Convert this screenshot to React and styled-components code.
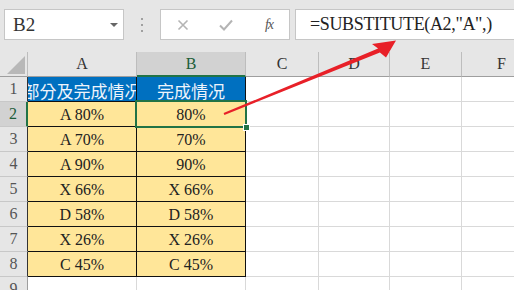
import styled, { createGlobalStyle } from "styled-components";

const GlobalStyle = createGlobalStyle`
  html, body {
    margin: 0;
    padding: 0;
    background: #fff;
  }
  * {
    box-sizing: border-box;
  }
`;

const Sheet = styled.div`
  position: relative;
  width: 514px;
  height: 290px;
  overflow: hidden;
  background: #fff;
  font-family: "Liberation Serif", "Noto Sans CJK TC", serif;
`;

/* formula bar */
const Toolbar = styled.div`
  height: 52px;
  background: #e6e6e6;
  display: flex;
  align-items: flex-start;
  padding-top: 9px;
  & > * {
    flex-shrink: 0;
  }
`;

const NameBox = styled.div`
  margin-left: 4px;
  width: 120px;
  height: 31px;
  border: 1px solid #c6c6c6;
  background: #fff;
  display: flex;
  align-items: center;
  padding-left: 8px;
  font-size: 19px;
  color: #333;
`;

const DropArrow = styled.span`
  margin-left: auto;
  margin-right: 5px;
  width: 0;
  height: 0;
  border-left: 4px solid transparent;
  border-right: 4px solid transparent;
  border-top: 4px solid #666;
`;

const Grip = styled.div`
  width: 36px;
  height: 31px;
  display: flex;
  flex-direction: column;
  align-items: center;
  justify-content: center;
  gap: 4px;
  span {
    width: 2px;
    height: 2px;
    background: #a0a0a0;
  }
`;

const FxBox = styled.div`
  width: 130px;
  height: 31px;
  border: 1px solid #c6c6c6;
  background: #fff;
  display: flex;
  align-items: center;
  padding-left: 14px;
  gap: 27px;
`;

const IconSlot = styled.div`
  width: 16px;
  height: 16px;
  display: flex;
  align-items: center;
  justify-content: center;
`;

const FxLabel = styled.span`
  font-style: italic;
  font-size: 14px;
  color: #555;
  letter-spacing: -1px;
`;

const FormulaBox = styled.div`
  margin-left: 5px;
  width: 260px;
  height: 31px;
  border: 1px solid #c6c6c6;
  background: #fff;
  display: flex;
  align-items: center;
  padding-left: 14px;
  font-size: 18px;
  letter-spacing: -0.35px;
  color: #222;
  white-space: nowrap;
`;

/* grid */
const Grid = styled.div`
  display: grid;
  grid-template-columns: 28px 109px 109px 73px 71px 72px 80px;
  grid-template-rows: repeat(10, 25px);
`;

const Corner = styled.div`
  background: #e6e6e6;
  border-right: 1px solid #bdbdbd;
  border-bottom: 1px solid #9e9e9e;
  position: relative;
  &::after {
    content: "";
    position: absolute;
    left: 7px;
    top: 4px;
    width: 18px;
    height: 18px;
    background: #b8b8b8;
    clip-path: polygon(100% 0, 100% 100%, 0 100%);
  }
`;

const ColHead = styled.div`
  background: ${(p) => (p.$active ? "#d2d2d2" : "#e6e6e6")};
  color: ${(p) => (p.$active ? "#1d5e38" : "#333")};
  border-right: 1px solid #bdbdbd;
  border-bottom: ${(p) => (p.$active ? "2px solid #217346" : "1px solid #9e9e9e")};
  font-size: 16px;
  line-height: 1;
  display: flex;
  align-items: flex-end;
  justify-content: center;
  padding-bottom: ${(p) => (p.$active ? "3px" : "4px")};
`;

const RowHead = styled.div`
  background: ${(p) => (p.$active ? "#d2d2d2" : "#e6e6e6")};
  color: ${(p) => (p.$active ? "#1d5e38" : "#555")};
  border-right: ${(p) =>
    p.$active ? "2px solid #217346" : `1px solid ${p.$edge || "#9e9e9e"}`};
  border-bottom: 1px solid #c8c8c8;
  font-size: 16px;
  line-height: 1;
  display: flex;
  align-items: flex-end;
  justify-content: center;
  padding-bottom: 4px;
`;

const Cell = styled.div`
  position: relative;
  background: ${(p) => p.$fill || "#fff"};
  color: ${(p) => p.$color || "#222"};
  border-right: 1px solid ${(p) => p.$line || "#d9d9d9"};
  border-bottom: 1px solid ${(p) => p.$line || "#d9d9d9"};
  font-size: 16px;
  line-height: 1;
  display: flex;
  align-items: flex-end;
  justify-content: center;
  padding-bottom: 3px;
  white-space: nowrap;
  overflow: ${(p) => (p.$clip ? "hidden" : "visible")};
`;

const TitleText = styled.span`
  font-family: "Noto Sans CJK TC", sans-serif;
  font-size: 17px;
  line-height: 1;
  flex-shrink: 0;
  margin-bottom: -1px;
`;

const Selection = styled.div`
  position: absolute;
  left: -2px;
  top: -2px;
  right: -2px;
  bottom: -2px;
  border: 2px solid #217346;
  pointer-events: none;
  z-index: 2;
`;

const FillHandle = styled.div`
  position: absolute;
  right: -5px;
  bottom: -5px;
  width: 7px;
  height: 7px;
  background: #217346;
  border: 1px solid #fff;
`;

const ArrowLayer = styled.svg`
  position: absolute;
  left: 0;
  top: 0;
  width: 514px;
  height: 290px;
  pointer-events: none;
  z-index: 5;
`;

const colA = ["A 80%", "A 70%", "A 90%", "X 66%", "D 58%", "X 26%", "C 45%"];
const colB = ["80%", "70%", "90%", "X 66%", "D 58%", "X 26%", "C 45%"];
const cols = ["A", "B", "C", "D", "E", "F"];

const DATA_FILL = "#ffe699";
const HEAD_FILL = "#0070c0";

const FormulaBar = () => (
  <Toolbar>
    <NameBox>
      B2
      <DropArrow />
    </NameBox>
    <Grip>
      <span />
      <span />
      <span />
    </Grip>
    <FxBox>
      <IconSlot>
        <svg width="12" height="12" viewBox="0 0 12 12">
          <path d="M1.5 1.5 L10.5 10.5 M10.5 1.5 L1.5 10.5" stroke="#b4b4b4" strokeWidth="1.6" fill="none" />
        </svg>
      </IconSlot>
      <IconSlot>
        <svg width="14" height="12" viewBox="0 0 14 12">
          <path d="M1 6.5 L5 10.5 L13 1.5" stroke="#b4b4b4" strokeWidth="2" fill="none" />
        </svg>
      </IconSlot>
      <IconSlot>
        <FxLabel>fx</FxLabel>
      </IconSlot>
    </FxBox>
    <FormulaBox>=SUBSTITUTE(A2,"A",)</FormulaBox>
  </Toolbar>
);

const App = () => {
  return (
    <Sheet>
      <GlobalStyle />
      <FormulaBar />
      <Grid>
        <Corner />
        {cols.map((c) => (
          <ColHead key={c} $active={c === "B"}>
            {c}
          </ColHead>
        ))}

        {/* row 1 : header cells */}
        <RowHead $edge="#333">1</RowHead>
        <Cell $fill={HEAD_FILL} $color="#eef4fb" $line="#111" $clip>
          <TitleText>部分及完成情况</TitleText>
        </Cell>
        <Cell $fill={HEAD_FILL} $color="#eef4fb" $line="#111" $clip>
          <TitleText>完成情况</TitleText>
        </Cell>
        <Cell />
        <Cell />
        <Cell />
        <Cell />

        {/* rows 2-8 */}
        {colA.map((a, i) => (
          <Row key={i} n={i + 2} a={a} b={colB[i]} />
        ))}

        <RowHead>9</RowHead>
        <Cell />
        <Cell />
        <Cell />
        <Cell />
        <Cell />
        <Cell />
      </Grid>

      <ArrowLayer viewBox="0 0 514 290">
        <polygon
          points="223.6,113.1 378.1,48.5 372,44 396,40.5 386,57.5 379.9,52.5 224.4,114.9"
          fill="#e82028"
        />
      </ArrowLayer>
    </Sheet>
  );
};

const Row = ({ n, a, b }) => {
  const active = n === 2;
  return (
    <>
      <RowHead $active={active} $edge="#333">
        {n}
      </RowHead>
      <Cell $fill={DATA_FILL} $line="#111">
        {a}
      </Cell>
      <Cell $fill={DATA_FILL} $line="#111">
        {b}
        {active && (
          <Selection>
            <FillHandle />
          </Selection>
        )}
      </Cell>
      <Cell />
      <Cell />
      <Cell />
      <Cell />
    </>
  );
};

export default App;
